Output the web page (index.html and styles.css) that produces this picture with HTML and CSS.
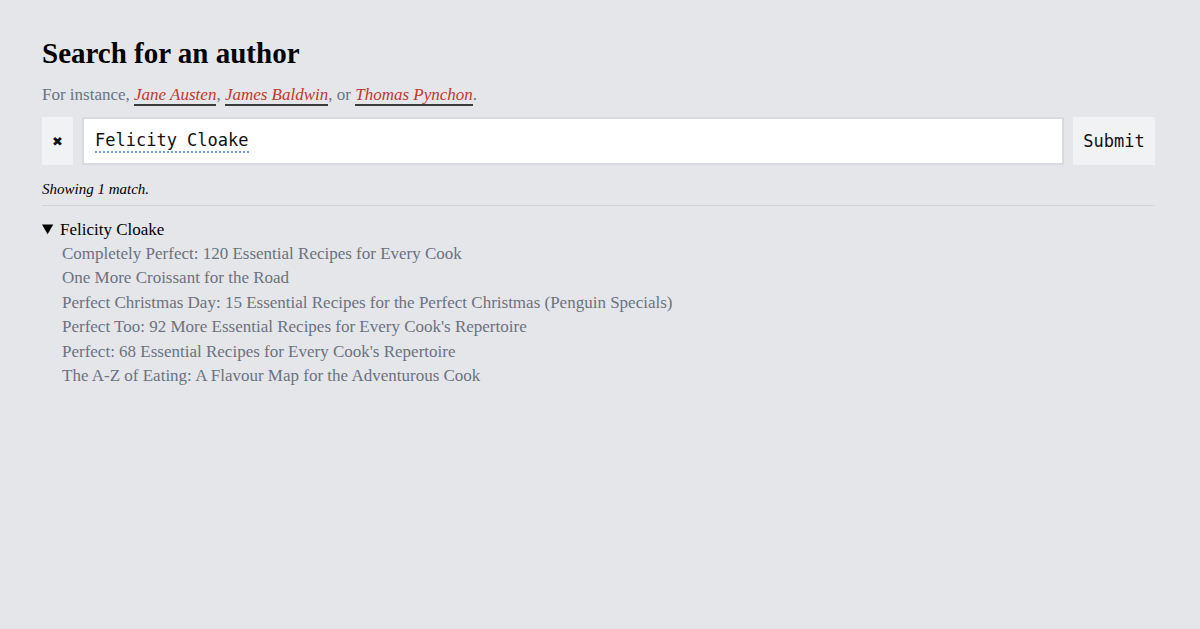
FILE: index.html
```html
<!DOCTYPE html>
<html>
<head>
<meta charset="utf-8">
<link rel="stylesheet" href="styles.css">
</head>
<body>
<main class="page">
  <h1 class="title">Search for an author</h1>
  <p class="hint">For instance, <a class="ex" href="#">Jane Austen</a>, <a class="ex" href="#">James Baldwin</a>, or <a class="ex" href="#">Thomas Pynchon</a>.</p>
  <form class="search">
    <button type="button" class="clear">✖</button>
    <div class="query" role="textbox" contenteditable="true" spellcheck="true"><span class="misspelt">Felicity Cloake</span></div>
    <button type="button" class="submit">Submit</button>
  </form>
  <p class="count">Showing 1 match.</p>
  <div class="results">
    <details open class="author">
      <summary class="name">Felicity Cloake</summary>
      <ul class="books">
        <li>Completely Perfect: 120 Essential Recipes for Every Cook</li>
        <li>One More Croissant for the Road</li>
        <li>Perfect Christmas Day: 15 Essential Recipes for the Perfect Christmas (Penguin Specials)</li>
        <li>Perfect Too: 92 More Essential Recipes for Every Cook's Repertoire</li>
        <li>Perfect: 68 Essential Recipes for Every Cook's Repertoire</li>
        <li>The A-Z of Eating: A Flavour Map for the Adventurous Cook</li>
      </ul>
    </details>
  </div>
</main>
</body>
</html>
```
FILE: styles.css
```css
html, body {
  margin: 0;
  padding: 0;
  background: #e5e6ea;
}
body {
  font-family: "Liberation Serif", "Times New Roman", serif;
  color: #000;
}
.page {
  padding: 36px 45px 0 42px;
}
.title {
  font-size: 29px;
  font-weight: bold;
  margin: 0;
  line-height: 34px;
}
.hint {
  margin: 13px 0 0;
  font-size: 17px;
  line-height: 24px;
  color: #6b7280;
}
.ex {
  color: #c0392b;
  font-style: italic;
  text-decoration: none;
  border-bottom: 2px solid #3a3a3a;
  padding-bottom: 0;
}
.search {
  display: flex;
  gap: 9px;
  margin-top: 10px;
  height: 48px;
}
.clear {
  width: 31px;
  border: 0;
  background: #f1f2f4;
  font-size: 13px;
  color: #111;
  padding: 0;
  font-family: "DejaVu Sans", sans-serif;
}
.query {
  flex: 1;
  display: flex;
  align-items: center;
  border: 2px solid #d9dadf;
  background: #fff;
  font-family: "DejaVu Sans Mono", monospace;
  font-size: 17px;
  padding: 0 11px;
  color: #111;
  outline: none;
  white-space: pre;
  overflow: hidden;
}
.misspelt {
  line-height: 20px;
  border-bottom: 2px dotted #6d9ee3;
  padding-bottom: 1px;
}
.submit {
  width: 82px;
  border: 0;
  background: #f1f2f4;
  font-family: "DejaVu Sans Mono", monospace;
  font-size: 17px;
  color: #111;
  padding: 0;
}
.count {
  margin: 14px 0 0;
  font-size: 15px;
  font-style: italic;
  line-height: 20px;
  padding-bottom: 6px;
  border-bottom: 1px solid #d4d5da;
}
.results {
  margin-top: 11px;
}
.name {
  font-size: 17px;
  line-height: 25px;
  cursor: pointer;
}
.books {
  list-style: none;
  margin: 0;
  padding: 0 0 0 20px;
}
.books li {
  font-size: 17px;
  line-height: 24.4px;
  color: #6b7280;
}
```
